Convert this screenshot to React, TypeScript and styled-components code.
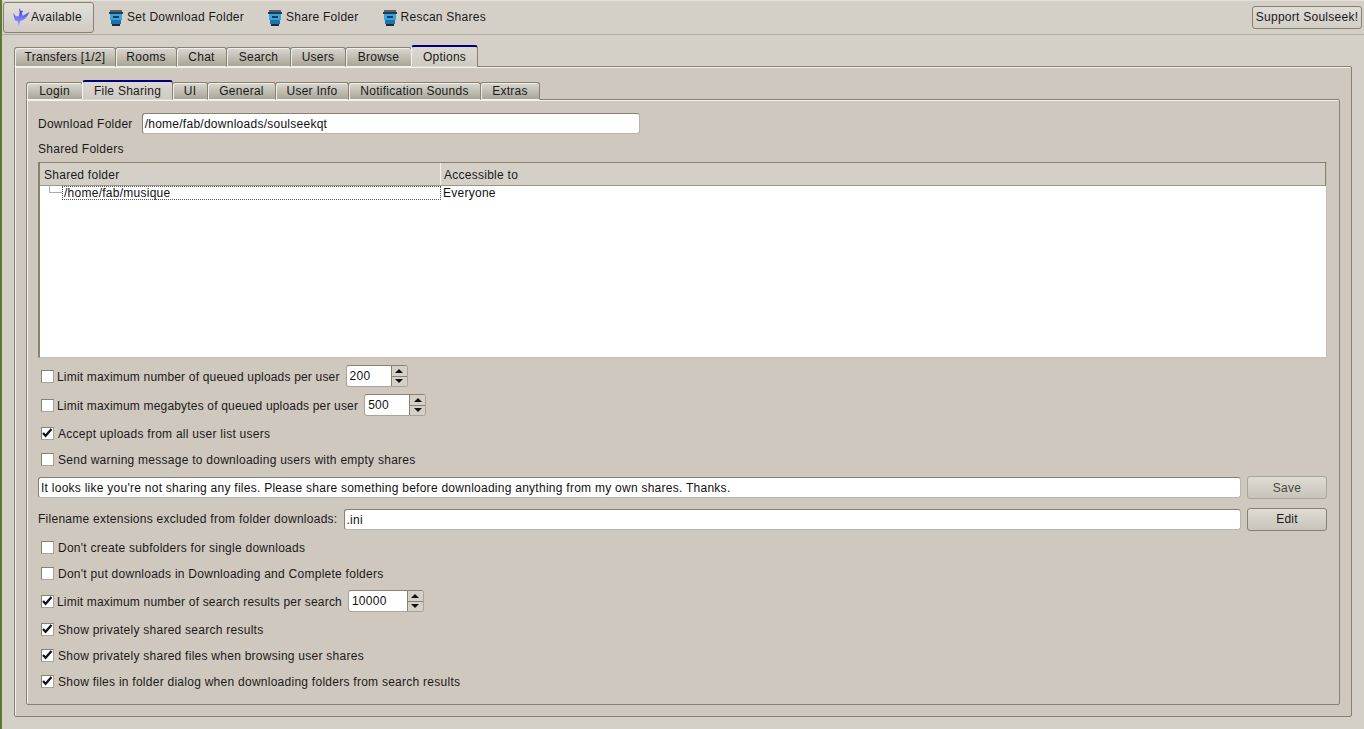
import React from "react";
import styled, { createGlobalStyle } from "styled-components";

const GlobalStyle = createGlobalStyle`
  html, body {
    margin: 0;
    height: 100%;
    overflow: hidden;
  }
  body {
    background: #d4d0c8;
    color: #1a1a1a;
    font-family: "Liberation Sans", Arial, sans-serif;
    font-size: 12px;
    letter-spacing: 0.26px;
  }
`;

const Window = styled.div`
  width: 1364px;
  height: 729px;
  box-sizing: border-box;
  border-left: 2px solid #5b7a2e;
  background: #d4d0c8;
`;

const Toolbar = styled.div`
  height: 35px;
  box-sizing: border-box;
  display: flex;
  align-items: center;
  padding: 0 2px 0 1px;
  border-bottom: 1px solid #b0aca4;
  border-top: 1px solid #e4e1db;
`;

const StatusButton = styled.button`
  width: 91px;
  height: 31px;
  display: flex;
  align-items: center;
  gap: 1px;
  padding: 0 0 2px 9px;
  font: inherit;
  letter-spacing: inherit;
  color: inherit;
  background: linear-gradient(#e2dfd9, #d0ccc4);
  border: 1px solid #86826f;
  border-radius: 3px;
`;

const ToolItem = styled.div<{ $gap: number }>`
  display: flex;
  align-items: center;
  gap: 4px;
  margin-left: ${(p) => p.$gap}px;
`;

const ToolLabel = styled.span`
  padding-bottom: 2px;
`;

const SupportButton = styled.button`
  margin-left: auto;
  height: 23px;
  width: 110px;
  padding: 0 0 2px;
  font: inherit;
  letter-spacing: inherit;
  color: inherit;
  background: linear-gradient(#e0ddd7, #d2cec6);
  border: 1px solid #86826f;
  border-radius: 3px;
`;

const TabsArea = styled.div<{ $outer?: boolean }>`
  padding: ${(p) => (p.$outer ? "11px 12px 0 12px" : "14px 11px 0 11px")};
`;

const TabBar = styled.div<{ $h: number }>`
  display: flex;
  align-items: flex-end;
  height: ${(p) => p.$h}px;
  position: relative;
  z-index: 1;
  margin-bottom: -1px;
`;

const Tab = styled.div<{ $active?: boolean; $w: number; $h: number }>`
  width: ${(p) => p.$w}px;
  height: ${(p) => (p.$active ? p.$h + 2 : p.$h)}px;
  box-sizing: border-box;
  display: flex;
  align-items: center;
  justify-content: center;
  border: 1px solid #86826f;
  border-left-color: ${(p) => (p.$active ? "#f4f2ee" : "#86826f")};
  border-top: ${(p) => (p.$active ? "2px solid #00007f" : "1px solid #86826f")};
  border-bottom: ${(p) => (p.$active ? "1px solid transparent" : "1px solid #f4f2ee")};
  border-radius: 3px 3px 0 0;
  margin-right: -1px;
  box-shadow: ${(p) => (p.$active ? "none" : "inset 1px 1px 0 #f0eee9")};
  background: ${(p) =>
    p.$active ? "linear-gradient(#dcd9d2, #cfcac1)" : "linear-gradient(#dad7d0, #a9a597)"};
`;

const Pane = styled.div<{ $h: number; $bg: string }>`
  height: ${(p) => p.$h}px;
  box-sizing: border-box;
  background: ${(p) => p.$bg};
  border: 1px solid #86826f;
  box-shadow: inset 1px 1px 0 #f4f2ee;
  border-radius: 0 2px 2px 2px;
`;

const Form = styled.div`
  padding: 13px 12px 0 11px;
  display: flex;
  flex-direction: column;
`;

const Row = styled.div<{ $h: number }>`
  height: ${(p) => p.$h}px;
  display: flex;
  align-items: center;
  white-space: nowrap;
`;

const Label = styled.span<{ $tight?: boolean }>`
  padding-top: 2px;
  ${(p) => (p.$tight ? "letter-spacing: 0.18px;" : "")}
`;

const Field = styled.div<{ $grow?: boolean; $w?: number; $pad: number }>`
  ${(p) => (p.$grow ? "flex: 1;" : `width: ${p.$w}px;`)}
  height: 21px;
  box-sizing: border-box;
  background: #fff;
  border: 1px solid #86826f;
  border-bottom-color: #b8b4aa;
  border-right-color: #b8b4aa;
  border-radius: 3px;
  padding-left: ${(p) => p.$pad}px;
  line-height: 21px;
  color: #111;
`;

const FieldLabel = styled.span<{ $gap: number }>`
  margin-right: ${(p) => p.$gap}px;
`;

const ActionButton = styled.button<{ $disabled?: boolean }>`
  width: 80px;
  height: 23px;
  margin-left: 6px;
  padding: 0;
  font: inherit;
  letter-spacing: inherit;
  color: ${(p) => (p.$disabled ? "#4a4843" : "#1a1a1a")};
  background: linear-gradient(#dedbd4, #c8c4ba);
  border: 1px solid ${(p) => (p.$disabled ? "#aaa698" : "#86826f")};
  border-radius: 3px;
`;

const TreeBox = styled.div`
  height: 196px;
  box-sizing: border-box;
  background: #fff;
  border: 1px solid #86826f;
  border-right-color: #c4c0b6;
  border-bottom-color: #c4c0b6;
  border-left-width: 2px;
  display: flex;
  flex-direction: column;
`;

const TreeHeader = styled.div`
  height: 23px;
  flex: none;
  box-sizing: border-box;
  display: flex;
  align-items: center;
  background: #d4d0c8;
  border-bottom: 1px solid #9a968a;
  border-right: 1px solid #86826f;
`;

const HeaderCell = styled.div<{ $w?: number }>`
  ${(p) => (p.$w ? `width: ${p.$w}px; border-right: 1px solid #f4f2ee; padding-left: 4px;` : "flex: 1; padding-left: 3px;")}
  height: 100%;
  box-sizing: border-box;
  line-height: 24px;
`;

const TreeRow = styled.div`
  height: 14px;
  display: flex;
  line-height: 13px;
  color: #111;
`;

const Branch = styled.div`
  width: 13px;
  flex: none;
  box-sizing: border-box;
  height: 7px;
  margin-left: 9px;
  border-left: 1px solid #b0aca4;
  border-bottom: 1px solid #b0aca4;
`;

const SelectedCell = styled.div`
  width: 379px;
  height: 14px;
  box-sizing: border-box;
  padding-left: 1px;
  border: 1px dotted #555;
`;

const PlainCell = styled.div`
  padding: 1px 0 0 2px;
`;

const Check = styled.span<{ $gap: number }>`
  width: 13px;
  height: 13px;
  flex: none;
  box-sizing: border-box;
  margin-left: 3px;
  margin-right: ${(p) => p.$gap}px;
  background: #fff;
  border: 1px solid #a8a498;
  border-top-color: #86826f;
  border-left-color: #86826f;
  display: inline-flex;
  align-items: center;
  justify-content: center;
`;

const Spin = styled.div<{ $w: number }>`
  width: ${(p) => p.$w}px;
  height: 22px;
  margin-left: 6px;
  box-sizing: border-box;
  display: flex;
  border: 1px solid #a8a498;
  border-top-color: #86826f;
  border-radius: 3px;
  background: #fff;
  overflow: hidden;
`;

const SpinValue = styled.div`
  flex: 1;
  line-height: 21px;
  padding-left: 3px;
  color: #111;
`;

const SpinButtons = styled.div`
  width: 15px;
  display: flex;
  flex-direction: column;
  border-left: 1px solid #86826f;
  background: #d4d0c8;
`;

const SpinArrow = styled.div<{ $down?: boolean }>`
  flex: 1;
  display: flex;
  align-items: center;
  justify-content: center;
  ${(p) => (p.$down ? "border-top: 1px solid #86826f;" : "")}
  &::after {
    content: "";
    border-left: 4px solid transparent;
    border-right: 4px solid transparent;
    ${(p) => (p.$down ? "border-top: 4px solid #111;" : "border-bottom: 4px solid #111;")}
  }
`;

const Bird = () => (
  <svg width="17" height="18" viewBox="0 0 17 18" aria-hidden="true">
    <defs>
      <linearGradient id="birdFill" x1="0" y1="0" x2="0" y2="1">
        <stop offset="0" stopColor="#3535e0" />
        <stop offset="1" stopColor="#a9a9ff" />
      </linearGradient>
    </defs>
    <path
      d="M6 0l1.5 2.5L10 3 8.8 5.5l1 2.2L16.5 4 14 8.5l-3 3-3.5 1.5-2 5-.8-4.5L2 12.5 0 5l3 3.5 2.8-.2L6.6 4z"
      fill="url(#birdFill)"
    />
  </svg>
);

const Bin = () => (
  <svg width="14" height="16" viewBox="0 0 14 16" aria-hidden="true">
    <rect x="1" y="0" width="12" height="2" fill="#55636c" />
    <rect x="0" y="2" width="14" height="2" fill="#2a3a44" />
    <rect x="1" y="4" width="12" height="6" fill="#33a4e4" />
    <rect x="4" y="6" width="6" height="2" fill="#0f3c5c" />
    <rect x="2" y="10" width="10" height="4" fill="#1b74ae" />
    <rect x="3" y="14" width="8" height="2" fill="#1e2a34" />
  </svg>
);

const Tick = () => (
  <svg width="11" height="11" viewBox="0 0 11 11" aria-hidden="true">
    <path d="M1 5l2.6 2.8L9.5 1" fill="none" stroke="#111" strokeWidth="2.2" />
  </svg>
);

const outerTabs: [string, number][] = [
  ["Transfers [1/2]", 102],
  ["Rooms", 62],
  ["Chat", 51],
  ["Search", 65],
  ["Users", 56],
  ["Browse", 67],
  ["Options", 67],
];

const innerTabs: [string, number][] = [
  ["Login", 57],
  ["File Sharing", 91],
  ["UI", 36],
  ["General", 69],
  ["User Info", 74],
  ["Notification Sounds", 133],
  ["Extras", 60],
];

const CheckRow = ({ on, h, label, children }: { on?: boolean; h: number; label: string; children?: React.ReactNode }) => (
  <Row $h={h}>
    <Check $gap={children ? 3 : 4}>{on && <Tick />}</Check>
    <Label $tight={!!children}>{label}</Label>
    {children}
  </Row>
);

const SpinBox = ({ value, w }: { value: string; w: number }) => (
  <Spin $w={w}>
    <SpinValue>{value}</SpinValue>
    <SpinButtons>
      <SpinArrow />
      <SpinArrow $down />
    </SpinButtons>
  </Spin>
);

export default function App() {
  return (
    <Window>
      <GlobalStyle />
      <Toolbar>
        <StatusButton>
          <Bird />
          Available
        </StatusButton>
        <ToolItem $gap={15}>
          <Bin />
          <ToolLabel>Set Download Folder</ToolLabel>
        </ToolItem>
        <ToolItem $gap={24}>
          <Bin />
          <ToolLabel>Share Folder</ToolLabel>
        </ToolItem>
        <ToolItem $gap={24}>
          <Bin />
          <ToolLabel>Rescan Shares</ToolLabel>
        </ToolItem>
        <SupportButton>Support Soulseek!</SupportButton>
      </Toolbar>
      <TabsArea $outer>
        <TabBar $h={21}>
          {outerTabs.map(([name, w]) => (
            <Tab key={name} $w={w} $h={20} $active={name === "Options"}>
              {name}
            </Tab>
          ))}
        </TabBar>
        <Pane $h={651} $bg="#cfc8be">
          <TabsArea>
            <TabBar $h={19}>
              {innerTabs.map(([name, w]) => (
                <Tab key={name} $w={w} $h={18} $active={name === "File Sharing"}>
                  {name}
                </Tab>
              ))}
            </TabBar>
            <Pane $h={606} $bg="#cfc8be">
              <Form>
                <Row $h={21}>
                  <FieldLabel $gap={9}>Download Folder</FieldLabel>
                  <Field $w={498} $pad={2}>/home/fab/downloads/soulseekqt</Field>
                </Row>
                <Row $h={28}>
                  <Label>Shared Folders</Label>
                </Row>
                <TreeBox>
                  <TreeHeader>
                    <HeaderCell $w={401}>Shared folder</HeaderCell>
                    <HeaderCell>Accessible to</HeaderCell>
                  </TreeHeader>
                  <TreeRow>
                    <Branch />
                    <SelectedCell>/home/fab/musique</SelectedCell>
                    <PlainCell>Everyone</PlainCell>
                  </TreeRow>
                </TreeBox>
                <CheckRow h={36} label="Limit maximum number of queued uploads per user">
                  <SpinBox value="200" w={62} />
                </CheckRow>
                <CheckRow h={22} label="Limit maximum megabytes of queued uploads per user">
                  <SpinBox value="500" w={62} />
                </CheckRow>
                <CheckRow on h={34} label="Accept uploads from all user list users" />
                <CheckRow h={18} label="Send warning message to downloading users with empty shares" />
                <Row $h={39}>
                  <Field $grow $pad={2}>It looks like you're not sharing any files. Please share something before downloading anything from my own shares. Thanks.</Field>
                  <ActionButton $disabled>Save</ActionButton>
                </Row>
                <Row $h={24}>
                  <FieldLabel $gap={7}>Filename extensions excluded from folder downloads:</FieldLabel>
                  <Field $grow $pad={1}>.ini</Field>
                  <ActionButton>Edit</ActionButton>
                </Row>
                <CheckRow h={32} label="Don't create subfolders for single downloads" />
                <CheckRow h={20} label="Don't put downloads in Downloading and Complete folders" />
                <CheckRow on h={36} label="Limit maximum number of search results per search">
                  <SpinBox value="10000" w={76} />
                </CheckRow>
                <CheckRow on h={20} label="Show privately shared search results" />
                <CheckRow on h={32} label="Show privately shared files when browsing user shares" />
                <CheckRow on h={20} label="Show files in folder dialog when downloading folders from search results" />
              </Form>
            </Pane>
          </TabsArea>
        </Pane>
      </TabsArea>
    </Window>
  );
}
